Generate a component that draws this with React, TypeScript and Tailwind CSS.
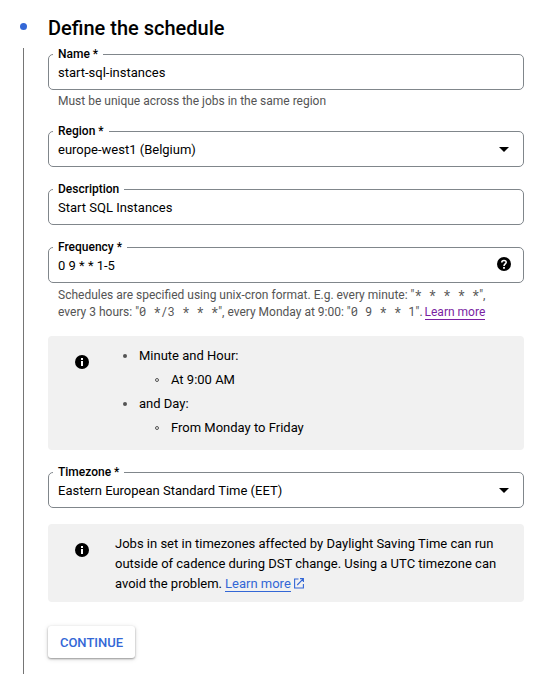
import type { ReactNode } from "react";

function Field({ label, value, adornment }: { label: string; value: string; adornment?: ReactNode }) {
  return (
    <fieldset className="h-[43px] w-[476px] min-w-0 rounded-[5px] border border-[#80868b]">
      <legend className="ml-1 h-[15px] px-[5px] text-[12px] leading-[15px] font-medium text-black">{label}</legend>
      <div className="flex h-[22px] items-center justify-between pl-[9px] pr-[9px]">
        <span className="text-[13px] leading-[22px] text-black">{value}</span>
        {adornment}
      </div>
    </fieldset>
  );
}

function Caret() {
  return (
    <svg className="mr-[5px] mb-px block" width="10" height="5" viewBox="0 0 10 5">
      <path d="M0 0h10L5 5z" fill="#000" />
    </svg>
  );
}

function Help() {
  return (
    <svg className="mr-[3px] mb-1 block shrink-0" width="14" height="14" viewBox="0 0 14 14" fill="none">
      <circle cx="7" cy="7" r="7" fill="#000" />
      <path d="M4.8 5.4C4.8 2.8 9.2 2.8 9.2 5.3C9.2 6.8 7 7 7 8.9" stroke="#fff" strokeWidth="1.6" />
      <path d="M6.1 10h1.8v1.7H6.1z" fill="#fff" />
    </svg>
  );
}

function Info() {
  return (
    <svg className="block shrink-0" width="14" height="14" viewBox="0 0 14 14">
      <circle cx="7" cy="7" r="7" />
      <path d="M6 3h2v2H6zM6 6h2v5H6z" fill="#fff" />
    </svg>
  );
}

function Code({ children }: { children: string }) {
  return <span className="whitespace-pre font-['Roboto_Mono','Liberation_Mono',monospace]">{children}</span>;
}

function Bullet({ children }: { children: string }) {
  return (
    <div className="flex h-6 items-center">
      <span className="mr-[12px] ml-px size-1 rounded-full bg-[#545454]" />
      {children}
    </div>
  );
}

function SubBullet({ children }: { children: string }) {
  return (
    <div className="ml-[33px] flex h-6 items-center">
      <span className="mr-[12px] size-1 rounded-full border border-[#545454]" />
      {children}
    </div>
  );
}

export default function App() {
  return (
    <div className="flex h-[674px] w-[540px] overflow-hidden bg-white font-['Roboto',sans-serif] text-black">
      <div className="flex w-12 shrink-0 flex-col">
        <span className="mt-[23px] ml-[19.5px] size-[7px] shrink-0 rounded-full bg-[#3367d6]" />
        <span className="mt-[18px] ml-[23px] w-px flex-1 bg-[#757575]" />
      </div>
      <main className="flex w-[476px] flex-col">
        <h1 className="mt-4 h-6 text-[20px] leading-6 font-medium">Define the schedule</h1>
        <div className="mt-[7px]">
          <Field label="Name *" value="start-sql-instances" />
        </div>
        <p className="mt-[3px] h-4 pl-[10px] text-[12px] leading-4 text-[#545454]">Must be unique across the jobs in the same region</p>
        <div className="mt-[15px]">
          <Field label="Region *" value="europe-west1 (Belgium)" adornment={<Caret />} />
        </div>
        <div className="mt-[15px]">
          <Field label="Description" value="Start SQL Instances" />
        </div>
        <div className="mt-[15px]">
          <Field label="Frequency *" value="0 9 * * 1-5" adornment={<Help />} />
        </div>
        <div className="mt-[3px] h-[35px] pl-[10px] text-[12px] leading-[17px] whitespace-nowrap text-[#545454]">
          <p className="h-[17px]">
            Schedules are specified using unix-cron format. E.g. every minute: "<Code>* * * * *</Code>",
          </p>
          <p className="h-[17px]">
            every 3 hours: "<Code>0 */3 * * *</Code>", every Monday at 9:00: "<Code>0 9 * * 1</Code>".{" "}
            <a className="-ml-px border-b border-[#7b1fa2] text-[#7b1fa2]">Learn more</a>
          </p>
        </div>
        <section className="mt-[15px] flex h-[114px] rounded-[4px] bg-[#f1f1f1] text-[13px]">
          <div className="w-12 pt-[19px] pl-[27px]">
            <Info />
          </div>
          <div className="pt-2 pl-[26px]">
            <Bullet>Minute and Hour:</Bullet>
            <SubBullet>At 9:00 AM</SubBullet>
            <Bullet>and Day:</Bullet>
            <SubBullet>From Monday to Friday</SubBullet>
          </div>
        </section>
        <div className="mt-[15px]">
          <Field label="Timezone *" value="Eastern European Standard Time (EET)" adornment={<Caret />} />
        </div>
        <section className="mt-4 flex h-[78px] rounded-[4px] bg-[#f1f1f1] text-[13px]">
          <div className="w-12 pt-[19px] pl-[27px]">
            <Info />
          </div>
          <div className="pt-[10px] pl-[19px] leading-5 whitespace-nowrap">
            <p>Jobs in set in timezones affected by Daylight Saving Time can run</p>
            <p>outside of cadence during DST change. Using a UTC timezone can</p>
            <p className="flex">
              <span className="mr-[3px]">avoid the problem.</span>
              <a className="mt-[2px] h-[16px] border-b border-[#3367d6] leading-4 text-[#3367d6]">Learn more</a>
              <svg className="mt-[4px] ml-[3px]" width="10" height="11" viewBox="0 0 10 11" fill="none" stroke="#3367d6" strokeWidth="1.1">
                <path d="M4.5 1H.6v9h8.8V6M6 .6h3.4V4M9.2.8 3.2 7" />
              </svg>
            </p>
          </div>
        </section>
        <button className="mt-6 h-8 w-[87px] rounded-[3px] bg-white pt-[2px] text-[13px] font-medium text-[#3367d6] shadow-[0_1px_2px_rgba(0,0,0,0.35),0_1px_5px_rgba(0,0,0,0.15)]">CONTINUE</button>
      </main>
    </div>
  );
}
